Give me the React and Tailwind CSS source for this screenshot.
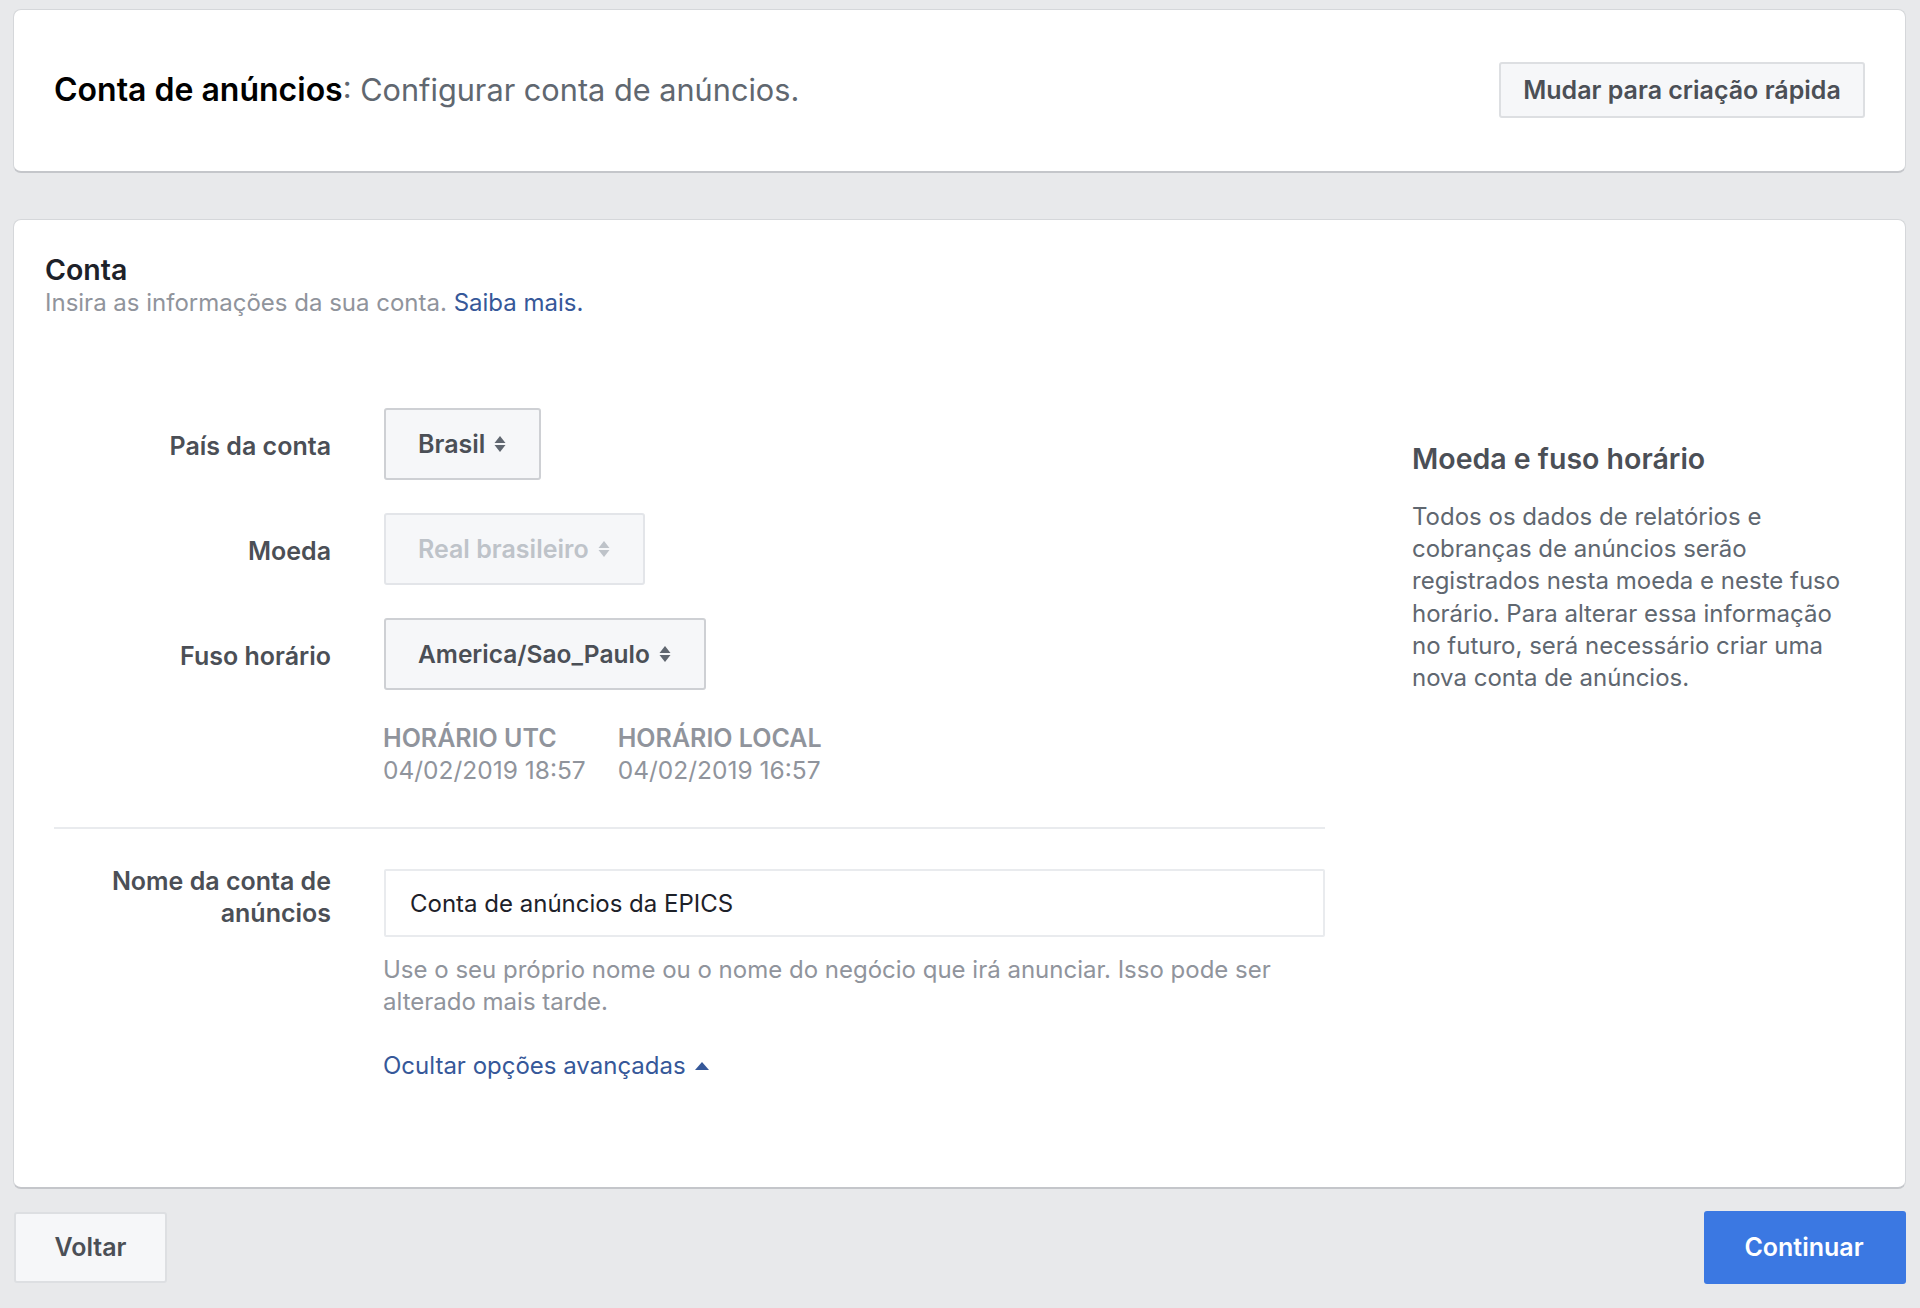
const Sorter = ({ className }) => (
  <svg className={className} width="12" height="18" viewBox="0 0 12 18" fill="currentColor">
    <path d="M6 1l5.5 7H.5z" />
    <path d="M6 17L.5 10h11z" />
  </svg>
);

function SelectBox({ label, disabled, textClass = 'text-[25px]' }) {
  return (
    <button
      className={`h-[72px] pl-[32px] pr-[33px] flex items-center gap-[9px] bg-[#f6f7f9] border-2 rounded-[3px] font-semibold ${textClass} ${
        disabled ? 'border-[#e3e5e9] text-[#bec3c9]' : 'border-[#ced0d4] text-[#4b4f56]'
      }`}
    >
      {label}
      <Sorter className={disabled ? 'text-[#bec3c9]' : 'text-[#606770]'} />
    </button>
  );
}

function FormRow({ label, children }) {
  return (
    <div className="flex items-center gap-[53px]">
      <label className="w-[277px] text-right font-semibold text-[25px] text-[#4b4f56] pt-[4px]">{label}</label>
      {children}
    </div>
  );
}

export default function App() {
  return (
    <div className="w-full h-[1308px] bg-[#e8e9eb] pt-[9px] pl-[13px] pr-[14px] font-['Inter',sans-serif] text-[24px] leading-[32px]">
      <div className="h-[164px] bg-white rounded-[8px] border border-[#d5d7da] border-b-[#c4c6ca] border-b-2 flex items-center justify-between pl-[40px] pr-[40px] pb-[2px]">
        <h1 className="text-[30.7px] text-[#606770]">
          <span className="font-semibold text-[32px] text-black">Conta de anúncios</span>: Configurar conta de anúncios.
        </h1>
        <button className="w-[366px] h-[56px] bg-[#f6f7f9] border-2 border-[#dddfe2] rounded-[3px] font-semibold text-[25px] text-[#4b4f56]">
          Mudar para criação rápida
        </button>
      </div>

      <div className="mt-[46px] h-[970px] bg-white rounded-[8px] border border-[#d5d7da] border-b-[#c4c6ca] border-b-2 pt-[34px] pl-[31px]">
        <h2 className="font-semibold text-[28.5px] text-[#1d2129]">Conta</h2>
        <p className="text-[#90949c] pt-[1px]">
          Insira as informações da sua conta. <a className="text-[#365899]">Saiba mais.</a>
        </p>

        <div className="flex mt-[89px] pl-[9px]">
          <div className="w-[1271px] shrink-0">
            <div className="flex flex-col gap-[33px]">
              <FormRow label="País da conta">
                <SelectBox label="Brasil" />
              </FormRow>
              <FormRow label="Moeda">
                <SelectBox label="Real brasileiro" disabled />
              </FormRow>
              <FormRow label="Fuso horário">
                <SelectBox label="America/Sao_Paulo" textClass="text-[24.5px]" />
              </FormRow>
            </div>

            <div className="flex gap-[32px] ml-[329px] mt-[32px] text-[24.5px] text-[#90949c]">
              <div>
                <div className="font-semibold text-[25px]">HORÁRIO UTC</div>
                <div>04/02/2019 18:57</div>
              </div>
              <div>
                <div className="font-semibold text-[25px]">HORÁRIO LOCAL</div>
                <div>04/02/2019 16:57</div>
              </div>
            </div>

            <div className="mt-[41px] border-t-2 border-[#e9ebee]" />

            <div className="flex gap-[53px] mt-[40px]">
              <label className="w-[277px] -mt-[4px] text-right font-semibold text-[25px] text-[#4b4f56]">
                Nome da conta de anúncios
              </label>
              <div className="flex-1">
                <input
                  readOnly
                  value="Conta de anúncios da EPICS"
                  className="w-full h-[68px] px-[24px] border-2 border-[#e9ebee] rounded-[2px] text-[#1d2129] outline-none"
                />
                <p className="mt-[17px] -ml-[1px] text-[#90949c]">
                  Use o seu próprio nome ou o nome do negócio que irá anunciar. Isso pode ser alterado mais tarde.
                </p>
                <a className="mt-[32px] -ml-[1px] flex items-center gap-[9px] text-[#365899]">
                  Ocultar opções avançadas
                  <svg width="14" height="8" viewBox="0 0 14 8" fill="currentColor">
                    <path d="M7 0l7 8H0z" />
                  </svg>
                </a>
              </div>
            </div>
          </div>

          <div className="ml-[87px] mt-[35px] w-[440px]">
            <h3 className="font-semibold text-[28.5px] text-[#4b4f56]">Moeda e fuso horário</h3>
            <p className="mt-[26px] leading-[32.2px] text-[#606770]">
              Todos os dados de relatórios e cobranças de anúncios serão registrados nesta moeda e neste fuso
              horário. Para alterar essa informação no futuro, será necessário criar uma nova conta de anúncios.
            </p>
          </div>
        </div>
      </div>

      <div className="mt-[22px] flex items-center justify-between">
        <button className="ml-[1px] w-[153px] h-[71px] pb-[2px] bg-[#f6f7f9] border-2 border-[#dddfe2] rounded-[3px] font-semibold text-[25px] text-[#4b4f56]">
          Voltar
        </button>
        <button className="w-[202px] h-[73px] pb-[2px] pr-[2px] bg-[#3b78e2] rounded-[3px] font-semibold text-[25px] text-white">
          Continuar
        </button>
      </div>
    </div>
  );
}
